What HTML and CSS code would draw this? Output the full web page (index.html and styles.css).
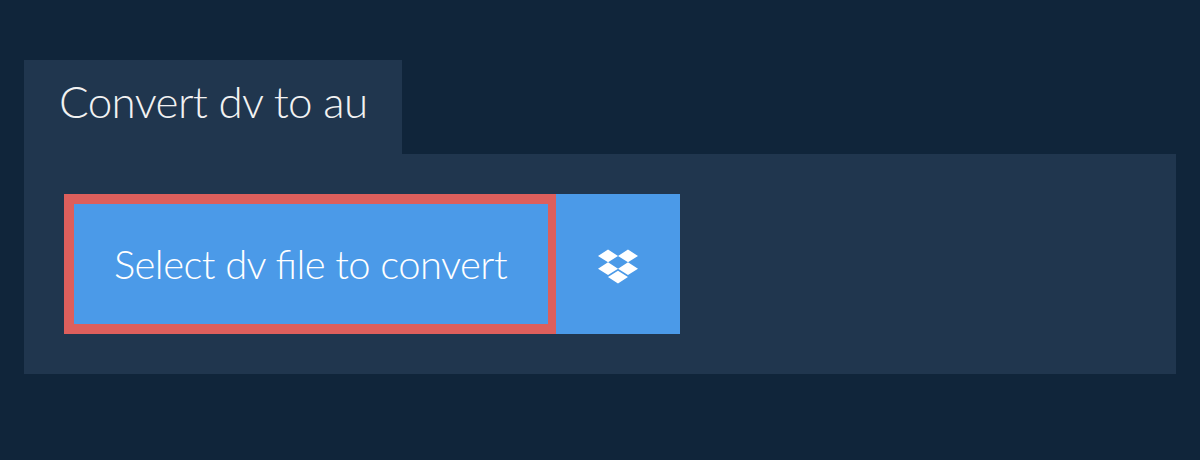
FILE: index.html
```html
<!DOCTYPE html>
<html lang="en">
<head>
  <meta charset="UTF-8">
  <meta name="viewport" content="width=device-width, initial-scale=1.0">
  <title>Convert dv to au</title>
  <link rel="stylesheet" href="styles.css">
</head>
<body>
  <div class="converter">
    <h1 class="tab-title">Convert dv to au</h1>

    <!-- Upload buttons -->
    <div class="panel">
      <button class="select-btn">Select dv file to convert</button>
      <button class="dropbox-btn" aria-label="Dropbox">
        <svg class="dropbox-icon" viewBox="0 0 528 512" fill="#fff">
          <path d="M264.4 116.3l-132 84.3 132 84.3-132 84.3L0 284.1l132.3-84.3L0 116.3 132.3 32l132.1 84.3zM131.6 395.7l132-84.3 132 84.3-132 84.3-132-84.3zm132.8-111.6l132-84.3-132-83.6L395.7 32 528 116.3l-132.3 84.3L528 284.8l-132.3 84.3-131.3-85z"/>
        </svg>
      </button>
    </div>
  </div>
</body>
</html>
```

FILE: styles.css
```css
html, body {
  margin: 0;
  padding: 0;
  height: 100%;
  background-color: #10253a;
  font-family: Lato, "Open Sans", sans-serif;
  font-weight: 300;
}

.converter {
  padding: 60px 24px 0;
}

.tab-title {
  display: inline-block;
  vertical-align: top;
  margin: 0;
  height: 94px;
  padding: 0 34px 0 35px;
  background-color: #20364e;
  color: #f2f2f2;
  font-size: 44px;
  font-weight: 300;
  letter-spacing: -0.65px;
  line-height: 82px;
}

.panel {
  display: flex;
  padding: 40px;
  background-color: #20364e;
}

.select-btn, .dropbox-btn {
  height: 140px;
  margin: 0;
  border: none;
  background-color: #4b9ae8;
  color: white;
  font-family: inherit;
  font-weight: 300;
  cursor: pointer;
}

.select-btn {
  box-sizing: border-box;
  width: 492px;
  padding: 0 1px 0 0;
  border: 10px solid #dd5f5c;
  border-right-width: 8px;
  font-size: 40px;
  letter-spacing: -0.57px;
  font-feature-settings: "liga" 1;
}

.dropbox-btn {
  display: flex;
  align-items: center;
  justify-content: center;
  width: 124px;
  padding: 4px 0 0 0;
}

.dropbox-icon {
  display: block;
  width: 40px;
  height: 39px;
}
```
